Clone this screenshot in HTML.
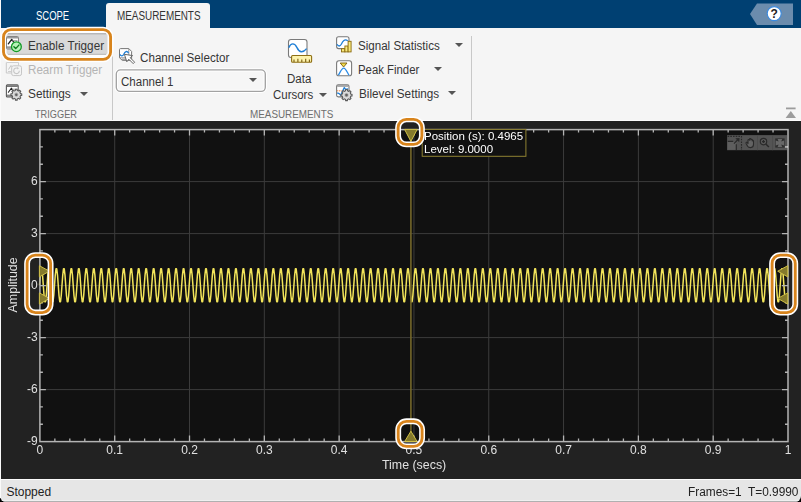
<!DOCTYPE html>
<html lang="en">
<head>
<meta charset="utf-8">
<title>Scope - Measurements</title>
<style>
html,body{margin:0;padding:0;}
body{width:801px;height:502px;overflow:hidden;background:#222222;position:relative;font-family:"Liberation Sans",sans-serif;font-size:12px;color:#2b2b2b;}
.abs{position:absolute;}
#tabbar{left:0;top:0;width:801px;height:28px;background:#004072;}
#strip{left:0;top:28px;width:801px;height:93px;background:#f5f5f5;border-bottom:1px solid #fcfcfc;box-sizing:border-box;}
#leftedge{left:0;top:0;width:1px;height:498px;background:#fafafa;}
.tab{transform:scaleX(var(--s,1));transform-origin:0 50%;position:absolute;top:0;height:28px;line-height:32px;font-size:12px;color:#fff;white-space:nowrap;}
#tab2{left:106.3px;top:3px;width:103.5px;height:26px;background:#f5f5f5;border-radius:3px 3px 0 0;}
.t{transform:scaleX(var(--s,1));position:absolute;white-space:nowrap;line-height:14px;height:14px;font-size:12px;color:#363636;transform-origin:0 50%;}
.sec{color:#6e6e6e;font-size:11.5px;}
.sep{position:absolute;width:1px;background:#c8c8c8;}
.arr{position:absolute;width:0;height:0;border-left:4px solid transparent;border-right:4px solid transparent;border-top:4.5px solid #555;}
#statusbg{left:0;top:490px;width:801px;height:12px;background:#000;}
#status{left:0;top:479px;width:801px;height:23px;background:#e6e6e6;border-top:1px solid #fbfbfb;box-sizing:border-box;border-radius:0 0 6px 6px;overflow:hidden;}
#status i{position:absolute;left:0;width:801px;height:1px;}
.pt{position:absolute;white-space:nowrap;color:#e6e6e6;font-size:12px;line-height:14px;height:14px;}
</style>
</head>
<body>
<div class="abs" id="tabbar"></div>
<div class="abs" id="strip"></div>
<div class="tab" style="--s:0.79;left:35.9px">SCOPE</div>
<div class="abs" id="tab2"></div><div class="tab" style="--s:0.824;left:117.2px;color:#333">MEASUREMENTS</div>

<!-- help -->
<svg class="abs" style="left:745px;top:0" width="56" height="28" viewBox="0 0 56 28">
<path d="M5 14 L12 3.5 H48 V25 H12 Z" fill="#6b8cad"/>
<circle cx="29.2" cy="13.6" r="7" fill="#fff" stroke="#3a8ae0" stroke-width="1.1"/>
<text x="29.2" y="18" text-anchor="middle" font-family="Liberation Sans, sans-serif" font-weight="bold" font-size="12" fill="#222">?</text>
</svg>

<!-- TRIGGER section -->
<div class="sep" style="left:112px;top:36px;height:84px;"></div>
<svg class="abs" style="left:0;top:20px" width="120" height="50" viewBox="0 20 120 50">
<rect x="3.5" y="29.6" width="107.1" height="29.8" rx="7.5" fill="#ffffff" stroke="#ffffff" stroke-width="5.9"/>
<rect x="3.5" y="29.6" width="107.1" height="29.8" rx="7.5" fill="none" stroke="#d8841c" stroke-width="2.85"/>
<rect x="6.5" y="33.3" width="101" height="21.5" rx="2.5" fill="#d9d9d9"/>
<path d="M8 33.8 H106" stroke="#a6a6a6" stroke-width="1"/>
<path d="M8 54.3 H106" stroke="#b8b8b8" stroke-width="1"/>
</svg>
<div class="t" style="--s:0.974;left:27.7px;top:38.8px;">Enable Trigger</div>
<div class="t" style="--s:0.967;left:27.7px;top:62.8px;color:#b4b4b4;">Rearm Trigger</div>
<div class="t" style="--s:0.986;left:28.2px;top:86.7px;">Settings</div>
<div class="arr" style="left:80px;top:91.5px;"></div>
<div class="t sec" style="--s:0.8;left:34.5px;top:107.3px;">TRIGGER</div>

<!-- MEASUREMENTS section -->
<div class="t" style="--s:0.970;left:140.4px;top:50.8px;">Channel Selector</div>
<svg class="abs" style="left:112px;top:66px" width="158" height="29" viewBox="112 66 158 29"><rect x="116.3" y="69.9" width="149" height="21.5" rx="4.2" fill="#f6f6f6" stroke="#ffffff" stroke-width="3.4"/><rect x="116.3" y="69.9" width="149" height="21.5" rx="4.2" fill="none" stroke="#a2a2a2" stroke-width="1.35"/></svg>
<div class="t" style="--s:0.960;left:120.8px;top:74.9px;">Channel 1</div>
<div class="arr" style="left:249.3px;top:78.3px;"></div>
<div class="t" style="--s:0.961;left:286.7px;top:71.7px;">Data</div>
<div class="t" style="--s:0.955;left:272.5px;top:87.5px;">Cursors</div>
<div class="arr" style="left:319.4px;top:92.7px;"></div>
<div class="t" style="--s:0.965;left:357.8px;top:38.8px;">Signal Statistics</div>
<div class="arr" style="left:454.7px;top:43px;"></div>
<div class="t" style="--s:0.947;left:357.8px;top:62.8px;">Peak Finder</div>
<div class="arr" style="left:434.4px;top:67px;"></div>
<div class="t" style="--s:0.977;left:359.2px;top:86.7px;">Bilevel Settings</div>
<div class="arr" style="left:447.5px;top:91px;"></div>
<div class="t sec" style="--s:0.858;left:249.6px;top:107.3px;">MEASUREMENTS</div>
<div class="sep" style="left:471px;top:36px;height:84px;"></div>

<svg class="abs" style="left:0;top:28px" width="480" height="92" viewBox="0 28 480 92">
<g>
<rect x="6.5" y="36.5" width="12" height="12.5" rx="1" fill="#fff" stroke="#858585"/>
<rect x="7" y="37" width="11" height="1.5" fill="#9a9a9a"/>
<rect x="7" y="46.3" width="11" height="2.4" fill="#9a9a9a"/>
<path d="M8.3 43.8 L11.7 39.5 L14 42.4" fill="none" stroke="#222" stroke-width="1.3" stroke-linejoin="round" stroke-linecap="round"/>
<path d="M12.5 40.6 H17.5" stroke="#9a9a9a" stroke-width="0.9"/>
<circle cx="16.4" cy="46.7" r="4.9" fill="#b9f2b9" stroke="#139a26" stroke-width="1.3"/>
<path d="M13.9 46.8 L15.7 48.6 L18.9 45.1" fill="none" stroke="#0d7d1c" stroke-width="1.4" stroke-linecap="round" stroke-linejoin="round"/>
</g>
<g opacity="1">
<path d="M6.3 62.5 V73 H11.5" fill="none" stroke="#c9c9c9" stroke-width="1"/>
<path d="M8 71.5 h3.5 M6.5 62.5 H18.5 V65.5" fill="none" stroke="#d0d0d0" stroke-width="1"/>
<path d="M8.5 69.5 L11 65.5 L12 66.8" fill="none" stroke="#c4c4c4" stroke-width="1"/>
<rect x="11.7" y="65.8" width="9.8" height="9.8" rx="1.8" fill="#f4f4f4" stroke="#c6c6c6"/>
<path d="M19.3 70.7 A2.8 2.8 0 1 1 17.6 68.2" fill="none" stroke="#c6c6c6" stroke-width="1.1"/>
<path d="M17 67 l2 1.2 l-1.7 1.4z" fill="#c6c6c6"/>
</g>
<g>
<rect x="6.4" y="84.9" width="11.8" height="12" rx="1" fill="#fff" stroke="#5a5a5a" stroke-width="1.1"/>
<rect x="7" y="85.4" width="10.8" height="1.5" fill="#6a6a6a"/>
<rect x="7" y="94.6" width="6" height="2" fill="#8a8a8a"/>
<path d="M8.4 92.2 L11.3 88.2 L13.3 90.8" fill="none" stroke="#222" stroke-width="1.1" stroke-linejoin="round" stroke-linecap="round"/>
<path d="M12 89.2 H17.5" stroke="#9a9a9a" stroke-width="0.9"/>
<path d="M20.49 93.73L21.73 93.84L21.73 95.56L20.49 95.67L19.95 96.98L20.75 97.93L19.53 99.15L18.58 98.35L17.27 98.89L17.16 100.13L15.44 100.13L15.33 98.89L14.02 98.35L13.07 99.15L11.85 97.93L12.65 96.98L12.11 95.67L10.87 95.56L10.87 93.84L12.11 93.73L12.65 92.42L11.85 91.47L13.07 90.25L14.02 91.05L15.33 90.51L15.44 89.27L17.16 89.27L17.27 90.51L18.58 91.05L19.53 90.25L20.75 91.47L19.95 92.42Z" fill="#dcdcdc" stroke="#5a5a5a" stroke-width="1.1" stroke-linejoin="round"/><circle cx="16.3" cy="94.7" r="2.1" fill="#b4b4b4"/><circle cx="16.3" cy="94.7" r="1.2" fill="#606060"/>
</g>
<g>
<path d="M120.5 48.6 H128.8 L131.6 51.4 V60.4 H122.3 L119.5 57.8 V49.6 Q119.5 48.6 120.5 48.6Z" fill="#fff" stroke="#777" stroke-width="1"/>
<path d="M128.8 48.8 V57.8 M119.7 57.8 H128.8 L131.4 60.2" fill="none" stroke="#8a8a8a" stroke-width="0.9"/>
<rect x="122" y="58.6" width="4.6" height="1.6" fill="#a4a4a4"/>
<path d="M119.8 54.3 C121 56.3 122.6 56.3 123.8 54.3 C125 51.3 126.8 50.5 128.6 53" fill="none" stroke="#1f7fd6" stroke-width="1.3"/>
<path d="M124.4 54.3 L132.6 55.6 L130.2 57.7 L134.6 62.2 L133.2 63.6 L128.8 59.2 L126.8 61.8 Z" fill="#fff" stroke="#666" stroke-width="1" stroke-linejoin="round"/>
</g>
<g>
<rect x="288.5" y="39.5" width="18.5" height="18" rx="2.5" fill="#fff" stroke="#7a7a7a" stroke-width="1.1"/>
<path d="M288.8 47.6 C291 42.6 294.5 42.6 297 47.6 C299.5 53 303 53 306.6 48.6" fill="none" stroke="#1f7fd6" stroke-width="1.4"/>
<rect x="291.6" y="55.5" width="20" height="6.8" rx="1" fill="#fdf3ad" stroke="#8f6f14" stroke-width="1.1"/>
<path d="M294 62 v-2.6 M297.9 62 v-3.2 M301.8 62 v-2.6 M305.7 62 v-3.2 M309.4 62 v-2.6" stroke="#7a5c10" stroke-width="1.1"/>
</g>
<g>
<rect x="336.6" y="36.8" width="12.4" height="11.8" rx="2" fill="#fff" stroke="#7a7a7a" stroke-width="1.1"/>
<path d="M337 44.3 C338.3 46.6 340 46.6 341.3 44.3 C342.8 41 344.5 38.6 347.8 40.8" fill="none" stroke="#1f7fd6" stroke-width="1.3"/>
<rect x="341.5" y="48.7" width="3.4" height="3.2" fill="#f8e97c" stroke="#8a6a10" stroke-width="0.9"/>
<rect x="344.9" y="46" width="3.2" height="5.9" fill="#f8e97c" stroke="#8a6a10" stroke-width="0.9"/>
<rect x="348.1" y="41.3" width="3" height="10.6" fill="#f8e97c" stroke="#8a6a10" stroke-width="0.9"/>
</g>
<g>
<rect x="336.6" y="60.8" width="15" height="15" rx="2.4" fill="#fff" stroke="#7a7a7a" stroke-width="1.1"/>
<path d="M338.4 75.2 C340.6 71.5 341.8 68.2 343.7 68.2 C345.5 68.2 346.8 71.5 349 75.2" fill="none" stroke="#2a8be6" stroke-width="1.3"/>
<path d="M340.2 63 H347 L343.6 67 Z" fill="#f2dc4a" stroke="#7a5c10" stroke-width="0.9" stroke-linejoin="round"/>
</g>
<g>
<rect x="336.6" y="84.9" width="12.4" height="12" rx="1.6" fill="#fff" stroke="#7a7a7a" stroke-width="1.1"/>
<rect x="337.2" y="85.4" width="11.2" height="1.4" fill="#9a9a9a"/>
<path d="M337.2 90.8 H342.4" stroke="#e9772a" stroke-width="1" stroke-dasharray="1 0.7"/>
<path d="M337.2 92.8 L339.2 93.6 L340.8 95.2 L342.4 91.6 L344.3 87.6 L345.6 89.4 L348.2 88.8" fill="none" stroke="#1f7fd6" stroke-width="1.3" stroke-linejoin="round"/>
<path d="M350.79 94.11L352.03 94.22L352.03 95.98L350.79 96.09L350.23 97.43L351.03 98.39L349.79 99.63L348.83 98.83L347.49 99.39L347.38 100.63L345.62 100.63L345.51 99.39L344.17 98.83L343.21 99.63L341.97 98.39L342.77 97.43L342.21 96.09L340.97 95.98L340.97 94.22L342.21 94.11L342.77 92.77L341.97 91.81L343.21 90.57L344.17 91.37L345.51 90.81L345.62 89.57L347.38 89.57L347.49 90.81L348.83 91.37L349.79 90.57L351.03 91.81L350.23 92.77Z" fill="#dcdcdc" stroke="#5a5a5a" stroke-width="1.1" stroke-linejoin="round"/><circle cx="346.5" cy="95.1" r="2.2" fill="#b4b4b4"/><circle cx="346.5" cy="95.1" r="1.3" fill="#606060"/>
</g>
</svg>
<svg class="abs" style="left:780px;top:104px" width="21" height="16" viewBox="780 104 21 16"><path d="M786 108.4 H795.6" stroke="#9c9c9c" stroke-width="1.8"/><path d="M785.6 117.9 L790.8 111 L796 117.9 Z" fill="#9c9c9c"/></svg>
<div class="abs" style="left:1px;top:27.5px;width:800px;height:1px;background:#f9f9f9;opacity:.0"></div>

<svg id="plot" width="801" height="502" viewBox="0 0 801 502" style="position:absolute;left:0;top:0;will-change:transform">
<rect x="39.9" y="129.6" width="748.10" height="312.00" fill="#111111"/>
<path d="M114.71 129.6V441.6M189.52 129.6V441.6M264.33 129.6V441.6M339.14 129.6V441.6M413.95 129.6V441.6M488.76 129.6V441.6M563.57 129.6V441.6M638.38 129.6V441.6M713.19 129.6V441.6M39.9 181.60H788.0M39.9 233.60H788.0M39.9 285.60H788.0M39.9 337.60H788.0M39.9 389.60H788.0" stroke="#3c3c3c" stroke-width="1" fill="none"/>
<polyline points="39.55,285.30 40.30,275.11 41.05,268.82 41.79,268.82 42.54,275.11 43.29,285.30 44.04,295.49 44.79,301.78 45.53,301.78 46.28,295.49 47.03,285.30 47.78,275.11 48.53,268.82 49.28,268.82 50.02,275.11 50.77,285.30 51.52,295.49 52.27,301.78 53.02,301.78 53.76,295.49 54.51,285.30 55.26,275.11 56.01,268.82 56.76,268.82 57.50,275.11 58.25,285.30 59.00,295.49 59.75,301.78 60.50,301.78 61.24,295.49 61.99,285.30 62.74,275.11 63.49,268.82 64.24,268.82 64.99,275.11 65.73,285.30 66.48,295.49 67.23,301.78 67.98,301.78 68.73,295.49 69.47,285.30 70.22,275.11 70.97,268.82 71.72,268.82 72.47,275.11 73.21,285.30 73.96,295.49 74.71,301.78 75.46,301.78 76.21,295.49 76.96,285.30 77.70,275.11 78.45,268.82 79.20,268.82 79.95,275.11 80.70,285.30 81.44,295.49 82.19,301.78 82.94,301.78 83.69,295.49 84.44,285.30 85.18,275.11 85.93,268.82 86.68,268.82 87.43,275.11 88.18,285.30 88.92,295.49 89.67,301.78 90.42,301.78 91.17,295.49 91.92,285.30 92.67,275.11 93.41,268.82 94.16,268.82 94.91,275.11 95.66,285.30 96.41,295.49 97.15,301.78 97.90,301.78 98.65,295.49 99.40,285.30 100.15,275.11 100.89,268.82 101.64,268.82 102.39,275.11 103.14,285.30 103.89,295.49 104.63,301.78 105.38,301.78 106.13,295.49 106.88,285.30 107.63,275.11 108.38,268.82 109.12,268.82 109.87,275.11 110.62,285.30 111.37,295.49 112.12,301.78 112.86,301.78 113.61,295.49 114.36,285.30 115.11,275.11 115.86,268.82 116.60,268.82 117.35,275.11 118.10,285.30 118.85,295.49 119.60,301.78 120.34,301.78 121.09,295.49 121.84,285.30 122.59,275.11 123.34,268.82 124.09,268.82 124.83,275.11 125.58,285.30 126.33,295.49 127.08,301.78 127.83,301.78 128.57,295.49 129.32,285.30 130.07,275.11 130.82,268.82 131.57,268.82 132.31,275.11 133.06,285.30 133.81,295.49 134.56,301.78 135.31,301.78 136.05,295.49 136.80,285.30 137.55,275.11 138.30,268.82 139.05,268.82 139.80,275.11 140.54,285.30 141.29,295.49 142.04,301.78 142.79,301.78 143.54,295.49 144.28,285.30 145.03,275.11 145.78,268.82 146.53,268.82 147.28,275.11 148.02,285.30 148.77,295.49 149.52,301.78 150.27,301.78 151.02,295.49 151.77,285.30 152.51,275.11 153.26,268.82 154.01,268.82 154.76,275.11 155.51,285.30 156.25,295.49 157.00,301.78 157.75,301.78 158.50,295.49 159.25,285.30 159.99,275.11 160.74,268.82 161.49,268.82 162.24,275.11 162.99,285.30 163.73,295.49 164.48,301.78 165.23,301.78 165.98,295.49 166.73,285.30 167.48,275.11 168.22,268.82 168.97,268.82 169.72,275.11 170.47,285.30 171.22,295.49 171.96,301.78 172.71,301.78 173.46,295.49 174.21,285.30 174.96,275.11 175.70,268.82 176.45,268.82 177.20,275.11 177.95,285.30 178.70,295.49 179.44,301.78 180.19,301.78 180.94,295.49 181.69,285.30 182.44,275.11 183.19,268.82 183.93,268.82 184.68,275.11 185.43,285.30 186.18,295.49 186.93,301.78 187.67,301.78 188.42,295.49 189.17,285.30 189.92,275.11 190.67,268.82 191.41,268.82 192.16,275.11 192.91,285.30 193.66,295.49 194.41,301.78 195.15,301.78 195.90,295.49 196.65,285.30 197.40,275.11 198.15,268.82 198.90,268.82 199.64,275.11 200.39,285.30 201.14,295.49 201.89,301.78 202.64,301.78 203.38,295.49 204.13,285.30 204.88,275.11 205.63,268.82 206.38,268.82 207.12,275.11 207.87,285.30 208.62,295.49 209.37,301.78 210.12,301.78 210.86,295.49 211.61,285.30 212.36,275.11 213.11,268.82 213.86,268.82 214.61,275.11 215.35,285.30 216.10,295.49 216.85,301.78 217.60,301.78 218.35,295.49 219.09,285.30 219.84,275.11 220.59,268.82 221.34,268.82 222.09,275.11 222.83,285.30 223.58,295.49 224.33,301.78 225.08,301.78 225.83,295.49 226.58,285.30 227.32,275.11 228.07,268.82 228.82,268.82 229.57,275.11 230.32,285.30 231.06,295.49 231.81,301.78 232.56,301.78 233.31,295.49 234.06,285.30 234.80,275.11 235.55,268.82 236.30,268.82 237.05,275.11 237.80,285.30 238.54,295.49 239.29,301.78 240.04,301.78 240.79,295.49 241.54,285.30 242.29,275.11 243.03,268.82 243.78,268.82 244.53,275.11 245.28,285.30 246.03,295.49 246.77,301.78 247.52,301.78 248.27,295.49 249.02,285.30 249.77,275.11 250.51,268.82 251.26,268.82 252.01,275.11 252.76,285.30 253.51,295.49 254.25,301.78 255.00,301.78 255.75,295.49 256.50,285.30 257.25,275.11 258.00,268.82 258.74,268.82 259.49,275.11 260.24,285.30 260.99,295.49 261.74,301.78 262.48,301.78 263.23,295.49 263.98,285.30 264.73,275.11 265.48,268.82 266.22,268.82 266.97,275.11 267.72,285.30 268.47,295.49 269.22,301.78 269.96,301.78 270.71,295.49 271.46,285.30 272.21,275.11 272.96,268.82 273.71,268.82 274.45,275.11 275.20,285.30 275.95,295.49 276.70,301.78 277.45,301.78 278.19,295.49 278.94,285.30 279.69,275.11 280.44,268.82 281.19,268.82 281.93,275.11 282.68,285.30 283.43,295.49 284.18,301.78 284.93,301.78 285.67,295.49 286.42,285.30 287.17,275.11 287.92,268.82 288.67,268.82 289.42,275.11 290.16,285.30 290.91,295.49 291.66,301.78 292.41,301.78 293.16,295.49 293.90,285.30 294.65,275.11 295.40,268.82 296.15,268.82 296.90,275.11 297.64,285.30 298.39,295.49 299.14,301.78 299.89,301.78 300.64,295.49 301.38,285.30 302.13,275.11 302.88,268.82 303.63,268.82 304.38,275.11 305.13,285.30 305.87,295.49 306.62,301.78 307.37,301.78 308.12,295.49 308.87,285.30 309.61,275.11 310.36,268.82 311.11,268.82 311.86,275.11 312.61,285.30 313.35,295.49 314.10,301.78 314.85,301.78 315.60,295.49 316.35,285.30 317.10,275.11 317.84,268.82 318.59,268.82 319.34,275.11 320.09,285.30 320.84,295.49 321.58,301.78 322.33,301.78 323.08,295.49 323.83,285.30 324.58,275.11 325.32,268.82 326.07,268.82 326.82,275.11 327.57,285.30 328.32,295.49 329.06,301.78 329.81,301.78 330.56,295.49 331.31,285.30 332.06,275.11 332.81,268.82 333.55,268.82 334.30,275.11 335.05,285.30 335.80,295.49 336.55,301.78 337.29,301.78 338.04,295.49 338.79,285.30 339.54,275.11 340.29,268.82 341.03,268.82 341.78,275.11 342.53,285.30 343.28,295.49 344.03,301.78 344.77,301.78 345.52,295.49 346.27,285.30 347.02,275.11 347.77,268.82 348.52,268.82 349.26,275.11 350.01,285.30 350.76,295.49 351.51,301.78 352.26,301.78 353.00,295.49 353.75,285.30 354.50,275.11 355.25,268.82 356.00,268.82 356.74,275.11 357.49,285.30 358.24,295.49 358.99,301.78 359.74,301.78 360.48,295.49 361.23,285.30 361.98,275.11 362.73,268.82 363.48,268.82 364.23,275.11 364.97,285.30 365.72,295.49 366.47,301.78 367.22,301.78 367.97,295.49 368.71,285.30 369.46,275.11 370.21,268.82 370.96,268.82 371.71,275.11 372.45,285.30 373.20,295.49 373.95,301.78 374.70,301.78 375.45,295.49 376.19,285.30 376.94,275.11 377.69,268.82 378.44,268.82 379.19,275.11 379.94,285.30 380.68,295.49 381.43,301.78 382.18,301.78 382.93,295.49 383.68,285.30 384.42,275.11 385.17,268.82 385.92,268.82 386.67,275.11 387.42,285.30 388.16,295.49 388.91,301.78 389.66,301.78 390.41,295.49 391.16,285.30 391.91,275.11 392.65,268.82 393.40,268.82 394.15,275.11 394.90,285.30 395.65,295.49 396.39,301.78 397.14,301.78 397.89,295.49 398.64,285.30 399.39,275.11 400.13,268.82 400.88,268.82 401.63,275.11 402.38,285.30 403.13,295.49 403.87,301.78 404.62,301.78 405.37,295.49 406.12,285.30 406.87,275.11 407.62,268.82 408.36,268.82 409.11,275.11 409.86,285.30 410.61,295.49 411.36,301.78 412.10,301.78 412.85,295.49 413.60,285.30 414.35,275.11 415.10,268.82 415.84,268.82 416.59,275.11 417.34,285.30 418.09,295.49 418.84,301.78 419.58,301.78 420.33,295.49 421.08,285.30 421.83,275.11 422.58,268.82 423.33,268.82 424.07,275.11 424.82,285.30 425.57,295.49 426.32,301.78 427.07,301.78 427.81,295.49 428.56,285.30 429.31,275.11 430.06,268.82 430.81,268.82 431.55,275.11 432.30,285.30 433.05,295.49 433.80,301.78 434.55,301.78 435.29,295.49 436.04,285.30 436.79,275.11 437.54,268.82 438.29,268.82 439.04,275.11 439.78,285.30 440.53,295.49 441.28,301.78 442.03,301.78 442.78,295.49 443.52,285.30 444.27,275.11 445.02,268.82 445.77,268.82 446.52,275.11 447.26,285.30 448.01,295.49 448.76,301.78 449.51,301.78 450.26,295.49 451.00,285.30 451.75,275.11 452.50,268.82 453.25,268.82 454.00,275.11 454.75,285.30 455.49,295.49 456.24,301.78 456.99,301.78 457.74,295.49 458.49,285.30 459.23,275.11 459.98,268.82 460.73,268.82 461.48,275.11 462.23,285.30 462.97,295.49 463.72,301.78 464.47,301.78 465.22,295.49 465.97,285.30 466.72,275.11 467.46,268.82 468.21,268.82 468.96,275.11 469.71,285.30 470.46,295.49 471.20,301.78 471.95,301.78 472.70,295.49 473.45,285.30 474.20,275.11 474.94,268.82 475.69,268.82 476.44,275.11 477.19,285.30 477.94,295.49 478.68,301.78 479.43,301.78 480.18,295.49 480.93,285.30 481.68,275.11 482.43,268.82 483.17,268.82 483.92,275.11 484.67,285.30 485.42,295.49 486.17,301.78 486.91,301.78 487.66,295.49 488.41,285.30 489.16,275.11 489.91,268.82 490.65,268.82 491.40,275.11 492.15,285.30 492.90,295.49 493.65,301.78 494.39,301.78 495.14,295.49 495.89,285.30 496.64,275.11 497.39,268.82 498.14,268.82 498.88,275.11 499.63,285.30 500.38,295.49 501.13,301.78 501.88,301.78 502.62,295.49 503.37,285.30 504.12,275.11 504.87,268.82 505.62,268.82 506.36,275.11 507.11,285.30 507.86,295.49 508.61,301.78 509.36,301.78 510.10,295.49 510.85,285.30 511.60,275.11 512.35,268.82 513.10,268.82 513.85,275.11 514.59,285.30 515.34,295.49 516.09,301.78 516.84,301.78 517.59,295.49 518.33,285.30 519.08,275.11 519.83,268.82 520.58,268.82 521.33,275.11 522.07,285.30 522.82,295.49 523.57,301.78 524.32,301.78 525.07,295.49 525.82,285.30 526.56,275.11 527.31,268.82 528.06,268.82 528.81,275.11 529.56,285.30 530.30,295.49 531.05,301.78 531.80,301.78 532.55,295.49 533.30,285.30 534.04,275.11 534.79,268.82 535.54,268.82 536.29,275.11 537.04,285.30 537.78,295.49 538.53,301.78 539.28,301.78 540.03,295.49 540.78,285.30 541.53,275.11 542.27,268.82 543.02,268.82 543.77,275.11 544.52,285.30 545.27,295.49 546.01,301.78 546.76,301.78 547.51,295.49 548.26,285.30 549.01,275.11 549.75,268.82 550.50,268.82 551.25,275.11 552.00,285.30 552.75,295.49 553.49,301.78 554.24,301.78 554.99,295.49 555.74,285.30 556.49,275.11 557.24,268.82 557.98,268.82 558.73,275.11 559.48,285.30 560.23,295.49 560.98,301.78 561.72,301.78 562.47,295.49 563.22,285.30 563.97,275.11 564.72,268.82 565.46,268.82 566.21,275.11 566.96,285.30 567.71,295.49 568.46,301.78 569.20,301.78 569.95,295.49 570.70,285.30 571.45,275.11 572.20,268.82 572.95,268.82 573.69,275.11 574.44,285.30 575.19,295.49 575.94,301.78 576.69,301.78 577.43,295.49 578.18,285.30 578.93,275.11 579.68,268.82 580.43,268.82 581.17,275.11 581.92,285.30 582.67,295.49 583.42,301.78 584.17,301.78 584.91,295.49 585.66,285.30 586.41,275.11 587.16,268.82 587.91,268.82 588.66,275.11 589.40,285.30 590.15,295.49 590.90,301.78 591.65,301.78 592.40,295.49 593.14,285.30 593.89,275.11 594.64,268.82 595.39,268.82 596.14,275.11 596.88,285.30 597.63,295.49 598.38,301.78 599.13,301.78 599.88,295.49 600.62,285.30 601.37,275.11 602.12,268.82 602.87,268.82 603.62,275.11 604.37,285.30 605.11,295.49 605.86,301.78 606.61,301.78 607.36,295.49 608.11,285.30 608.85,275.11 609.60,268.82 610.35,268.82 611.10,275.11 611.85,285.30 612.59,295.49 613.34,301.78 614.09,301.78 614.84,295.49 615.59,285.30 616.34,275.11 617.08,268.82 617.83,268.82 618.58,275.11 619.33,285.30 620.08,295.49 620.82,301.78 621.57,301.78 622.32,295.49 623.07,285.30 623.82,275.11 624.56,268.82 625.31,268.82 626.06,275.11 626.81,285.30 627.56,295.49 628.30,301.78 629.05,301.78 629.80,295.49 630.55,285.30 631.30,275.11 632.05,268.82 632.79,268.82 633.54,275.11 634.29,285.30 635.04,295.49 635.79,301.78 636.53,301.78 637.28,295.49 638.03,285.30 638.78,275.11 639.53,268.82 640.27,268.82 641.02,275.11 641.77,285.30 642.52,295.49 643.27,301.78 644.01,301.78 644.76,295.49 645.51,285.30 646.26,275.11 647.01,268.82 647.76,268.82 648.50,275.11 649.25,285.30 650.00,295.49 650.75,301.78 651.50,301.78 652.24,295.49 652.99,285.30 653.74,275.11 654.49,268.82 655.24,268.82 655.98,275.11 656.73,285.30 657.48,295.49 658.23,301.78 658.98,301.78 659.72,295.49 660.47,285.30 661.22,275.11 661.97,268.82 662.72,268.82 663.47,275.11 664.21,285.30 664.96,295.49 665.71,301.78 666.46,301.78 667.21,295.49 667.95,285.30 668.70,275.11 669.45,268.82 670.20,268.82 670.95,275.11 671.69,285.30 672.44,295.49 673.19,301.78 673.94,301.78 674.69,295.49 675.43,285.30 676.18,275.11 676.93,268.82 677.68,268.82 678.43,275.11 679.18,285.30 679.92,295.49 680.67,301.78 681.42,301.78 682.17,295.49 682.92,285.30 683.66,275.11 684.41,268.82 685.16,268.82 685.91,275.11 686.66,285.30 687.40,295.49 688.15,301.78 688.90,301.78 689.65,295.49 690.40,285.30 691.15,275.11 691.89,268.82 692.64,268.82 693.39,275.11 694.14,285.30 694.89,295.49 695.63,301.78 696.38,301.78 697.13,295.49 697.88,285.30 698.63,275.11 699.37,268.82 700.12,268.82 700.87,275.11 701.62,285.30 702.37,295.49 703.11,301.78 703.86,301.78 704.61,295.49 705.36,285.30 706.11,275.11 706.86,268.82 707.60,268.82 708.35,275.11 709.10,285.30 709.85,295.49 710.60,301.78 711.34,301.78 712.09,295.49 712.84,285.30 713.59,275.11 714.34,268.82 715.08,268.82 715.83,275.11 716.58,285.30 717.33,295.49 718.08,301.78 718.82,301.78 719.57,295.49 720.32,285.30 721.07,275.11 721.82,268.82 722.57,268.82 723.31,275.11 724.06,285.30 724.81,295.49 725.56,301.78 726.31,301.78 727.05,295.49 727.80,285.30 728.55,275.11 729.30,268.82 730.05,268.82 730.79,275.11 731.54,285.30 732.29,295.49 733.04,301.78 733.79,301.78 734.53,295.49 735.28,285.30 736.03,275.11 736.78,268.82 737.53,268.82 738.28,275.11 739.02,285.30 739.77,295.49 740.52,301.78 741.27,301.78 742.02,295.49 742.76,285.30 743.51,275.11 744.26,268.82 745.01,268.82 745.76,275.11 746.50,285.30 747.25,295.49 748.00,301.78 748.75,301.78 749.50,295.49 750.24,285.30 750.99,275.11 751.74,268.82 752.49,268.82 753.24,275.11 753.99,285.30 754.73,295.49 755.48,301.78 756.23,301.78 756.98,295.49 757.73,285.30 758.47,275.11 759.22,268.82 759.97,268.82 760.72,275.11 761.47,285.30 762.21,295.49 762.96,301.78 763.71,301.78 764.46,295.49 765.21,285.30 765.96,275.11 766.70,268.82 767.45,268.82 768.20,275.11 768.95,285.30 769.70,295.49 770.44,301.78 771.19,301.78 771.94,295.49 772.69,285.30 773.44,275.11 774.18,268.82 774.93,268.82 775.68,275.11 776.43,285.30 777.18,295.49 777.92,301.78 778.67,301.78 779.42,295.49 780.17,285.30 780.92,275.11 781.67,268.82 782.41,268.82 783.16,275.11 783.91,285.30 784.66,295.49 785.41,301.78 786.15,301.78 786.90,295.49" fill="none" stroke="#f2e45a" stroke-width="1.5" stroke-linejoin="round"/>
<path d="M54.86 441.6v-3M54.86 129.6v3M69.82 441.6v-3M69.82 129.6v3M84.79 441.6v-3M84.79 129.6v3M99.75 441.6v-3M99.75 129.6v3M114.71 441.6v-6M114.71 129.6v6M129.67 441.6v-3M129.67 129.6v3M144.63 441.6v-3M144.63 129.6v3M159.60 441.6v-3M159.60 129.6v3M174.56 441.6v-3M174.56 129.6v3M189.52 441.6v-6M189.52 129.6v6M204.48 441.6v-3M204.48 129.6v3M219.44 441.6v-3M219.44 129.6v3M234.41 441.6v-3M234.41 129.6v3M249.37 441.6v-3M249.37 129.6v3M264.33 441.6v-6M264.33 129.6v6M279.29 441.6v-3M279.29 129.6v3M294.25 441.6v-3M294.25 129.6v3M309.22 441.6v-3M309.22 129.6v3M324.18 441.6v-3M324.18 129.6v3M339.14 441.6v-6M339.14 129.6v6M354.10 441.6v-3M354.10 129.6v3M369.06 441.6v-3M369.06 129.6v3M384.03 441.6v-3M384.03 129.6v3M398.99 441.6v-3M398.99 129.6v3M413.95 441.6v-6M413.95 129.6v6M428.91 441.6v-3M428.91 129.6v3M443.87 441.6v-3M443.87 129.6v3M458.84 441.6v-3M458.84 129.6v3M473.80 441.6v-3M473.80 129.6v3M488.76 441.6v-6M488.76 129.6v6M503.72 441.6v-3M503.72 129.6v3M518.68 441.6v-3M518.68 129.6v3M533.65 441.6v-3M533.65 129.6v3M548.61 441.6v-3M548.61 129.6v3M563.57 441.6v-6M563.57 129.6v6M578.53 441.6v-3M578.53 129.6v3M593.49 441.6v-3M593.49 129.6v3M608.46 441.6v-3M608.46 129.6v3M623.42 441.6v-3M623.42 129.6v3M638.38 441.6v-6M638.38 129.6v6M653.34 441.6v-3M653.34 129.6v3M668.30 441.6v-3M668.30 129.6v3M683.27 441.6v-3M683.27 129.6v3M698.23 441.6v-3M698.23 129.6v3M713.19 441.6v-6M713.19 129.6v6M728.15 441.6v-3M728.15 129.6v3M743.11 441.6v-3M743.11 129.6v3M758.08 441.6v-3M758.08 129.6v3M773.04 441.6v-3M773.04 129.6v3M39.9 424.27h3M788.0 424.27h-3M39.9 406.93h3M788.0 406.93h-3M39.9 389.60h6M788.0 389.60h-6M39.9 372.27h3M788.0 372.27h-3M39.9 354.93h3M788.0 354.93h-3M39.9 337.60h6M788.0 337.60h-6M39.9 320.27h3M788.0 320.27h-3M39.9 302.93h3M788.0 302.93h-3M39.9 285.60h6M788.0 285.60h-6M39.9 268.27h3M788.0 268.27h-3M39.9 250.93h3M788.0 250.93h-3M39.9 233.60h6M788.0 233.60h-6M39.9 216.27h3M788.0 216.27h-3M39.9 198.93h3M788.0 198.93h-3M39.9 181.60h6M788.0 181.60h-6M39.9 164.27h3M788.0 164.27h-3M39.9 146.93h3M788.0 146.93h-3" stroke="#b4b4b4" stroke-width="1.3" fill="none"/>
<rect x="39.9" y="129.6" width="748.10" height="312.00" fill="none" stroke="#b4b4b4" stroke-width="1.5"/>
<g font-family="Liberation Sans, sans-serif" font-size="12" fill="#e0e0e0">
<text x="39.90" y="453.9" text-anchor="middle">0</text>
<text x="114.71" y="453.9" text-anchor="middle">0.1</text>
<text x="189.52" y="453.9" text-anchor="middle">0.2</text>
<text x="264.33" y="453.9" text-anchor="middle">0.3</text>
<text x="339.14" y="453.9" text-anchor="middle">0.4</text>
<text x="413.95" y="453.9" text-anchor="middle">0.5</text>
<text x="488.76" y="453.9" text-anchor="middle">0.6</text>
<text x="563.57" y="453.9" text-anchor="middle">0.7</text>
<text x="638.38" y="453.9" text-anchor="middle">0.8</text>
<text x="713.19" y="453.9" text-anchor="middle">0.9</text>
<text x="788.00" y="453.9" text-anchor="middle">1</text>
<text x="37.6" y="185.40" text-anchor="end">6</text>
<text x="37.6" y="237.40" text-anchor="end">3</text>
<text x="37.6" y="289.40" text-anchor="end">0</text>
<text x="37.6" y="341.40" text-anchor="end">-3</text>
<text x="37.6" y="393.40" text-anchor="end">-6</text>
<text x="37.6" y="445.40" text-anchor="end">-9</text>
<text x="414.1" y="468.9" font-size="12.4" text-anchor="middle">Time (secs)</text>
<text transform="translate(16.5 284.9) rotate(-90)" font-size="12.4" text-anchor="middle">Amplitude</text>
</g>
<path d="M410.9 129.6V441.6" stroke="#74672a" stroke-width="1.6"/>
<rect x="422.2" y="129.4" width="103.7" height="26.9" fill="#111111" stroke="#8f8232" stroke-width="1"/>
<g font-family="Liberation Sans, sans-serif" font-size="11.5" fill="#ffffff"><text x="424.0" y="140.1">Position (s): 0.4965</text><text x="424.0" y="152.8">Level: 9.0000</text></g>
<path d="M404.6 129.4 H417.2 L410.9 141.4 Z" fill="#857a2c" stroke="#d0c046" stroke-width="1" stroke-linejoin="round"/>
<path d="M404.7 441.5 H417.1 L410.9 431.2 Z" fill="#857a2c" stroke="#d0c046" stroke-width="1" stroke-linejoin="round"/>
<path d="M39.4 265.7 V276.9 L49.4 271.2 Z" fill="#857a2c" stroke="#d0c046" stroke-width="1" stroke-linejoin="round"/>
<path d="M787.8 265.7 V276.9 L777.7 271.2 Z" fill="#857a2c" stroke="#d0c046" stroke-width="1" stroke-linejoin="round"/>
<path d="M39.4 292.9 V304.09999999999997 L49.4 298.4 Z" fill="#857a2c" stroke="#d0c046" stroke-width="1" stroke-linejoin="round"/>
<path d="M787.8 292.9 V304.09999999999997 L777.7 298.4 Z" fill="#857a2c" stroke="#d0c046" stroke-width="1" stroke-linejoin="round"/>
<g>
<rect x="727.1" y="135.1" width="59.9" height="15.1" fill="#545454"/>
<path d="M757.5 135.2 V150.2 M772.6 135.2 V150.2" stroke="#4c4c4c" stroke-width="1"/>
<rect x="727.6" y="141.6" width="8.4" height="8.2" fill="#5e5e5e"/>
<path d="M727.6 136.3 H740.6 M741.5 136 V150" fill="none" stroke="#2a2a2a" stroke-width="1.15" stroke-dasharray="1.6 1.1"/>
<path d="M727.8 141.4 H733.2 M734 143.7 L738.4 139 M736.3 144.2 V150" fill="none" stroke="#2a2a2a" stroke-width="1.15"/>
<path d="M735.4 138.3 L739.6 137.9 L739.2 142.2 Z" fill="#2a2a2a"/>
<path d="M747.6 146.2 L746.1 143.4 C745.7 142.3 746.9 141.8 747.5 142.8 L748 143.6 V140.2 C748 139.2 749.3 139.2 749.4 140.2 V139.4 C749.5 138.4 750.8 138.4 750.9 139.4 V140 C751 139.1 752.2 139.1 752.3 140.1 V140.9 C752.4 140.1 753.5 140.2 753.5 141.2 V144.6 C753.5 146.6 752.4 147.6 750.6 147.6 C749 147.6 748.2 147.2 747.6 146.2 Z" fill="#636363" stroke="#2a2a2a" stroke-width="1.1" stroke-linejoin="round"/>
<circle cx="763.5" cy="141.6" r="3.2" fill="#585858" stroke="#2a2a2a" stroke-width="1.15"/><path d="M765.8 144 L768.9 147" stroke="#2a2a2a" stroke-width="1.5" fill="none"/><path d="M762 141.6 H765 M763.5 140.1 V143.1" fill="none" stroke="#2a2a2a" stroke-width="1.15"/>
<rect x="775.2" y="138.4" width="9.4" height="9.2" fill="#2e2e2e"/>
<path d="M777.6 138.9 H782.2 L781.2 141.6 L784.1 140.6 V145.4 L781.2 144.4 L782.2 147.1 H777.6 L778.6 144.4 L775.7 145.4 V140.6 L778.6 141.6 Z" fill="#686868"/>
</g>
<path d="M788.0 146.93h-3" stroke="#d0d0d0" stroke-width="1.3"/>
<rect x="27.1" y="255.1" width="23.50" height="57.45" rx="8.3" fill="none" stroke="#ffffff" stroke-width="5.9"/><rect x="27.1" y="255.1" width="23.50" height="57.45" rx="8.3" fill="none" stroke="#d8841c" stroke-width="2.85"/>
<rect x="772.1" y="255.1" width="23.15" height="57.45" rx="8.3" fill="none" stroke="#ffffff" stroke-width="5.9"/><rect x="772.1" y="255.1" width="23.15" height="57.45" rx="8.3" fill="none" stroke="#d8841c" stroke-width="2.85"/>
<rect x="398.1" y="119.4" width="23.80" height="25.00" rx="8.3" fill="none" stroke="#ffffff" stroke-width="5.9"/><rect x="398.1" y="119.4" width="23.80" height="25.00" rx="8.3" fill="none" stroke="#d8841c" stroke-width="2.85"/>
<rect x="398.2" y="421.3" width="23.90" height="25.10" rx="8.3" fill="none" stroke="#ffffff" stroke-width="5.9"/><rect x="398.2" y="421.3" width="23.90" height="25.10" rx="8.3" fill="none" stroke="#d8841c" stroke-width="2.85"/>
</svg>

<div class="abs" id="statusbg"></div>
<div class="abs" id="status"><i style="top:20px;background:#f0f0f0"></i><i style="top:21px;background:#b0b0b0"></i></div>
<div class="t" style="left:6.4px;top:485px;color:#222;">Stopped</div>
<div class="t" style="--s:0.987;left:688.2px;top:485px;color:#222;">Frames=1&nbsp; T=0.9990</div>
<div class="abs" id="leftedge"></div>
</body>
</html>
